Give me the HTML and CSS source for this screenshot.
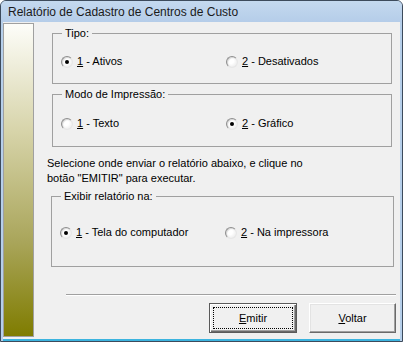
FILE: index.html
```html
<!DOCTYPE html>
<html lang="pt">
<head>
<meta charset="UTF-8" />
<title>Relatório de Cadastro de Centros de Custo</title>
<link rel="stylesheet" href="styles.css">
</head>
<body>

<div class="window">
  <div class="titlebar">Relatório de Cadastro de Centros de Custo</div>
  <div class="client">
    <div class="side-panel"></div>
    <div class="content">
      <fieldset class="group group-tipo">
        <legend>Tipo:</legend>
        <div class="options">
          <label class="radio checked"><span class="mark"></span><span><u>1</u> - Ativos</span></label>
          <label class="radio"><span class="mark"></span><span><u>2</u> - Desativados</span></label>
        </div>
      </fieldset>

      <fieldset class="group group-modo">
        <legend>Modo de Impressão:</legend>
        <div class="options">
          <label class="radio"><span class="mark"></span><span><u>1</u> - Texto</span></label>
          <label class="radio checked"><span class="mark"></span><span><u>2</u> - Gráfico</span></label>
        </div>
      </fieldset>

      <p class="hint">Selecione onde enviar o relatório abaixo, e clique no<br>botão "EMITIR" para executar.</p>

      <fieldset class="group group-destino">
        <legend>Exibir relatório na:</legend>
        <div class="options">
          <label class="radio checked"><span class="mark"></span><span><u>1</u> - Tela do computador</span></label>
          <label class="radio"><span class="mark"></span><span><u>2</u> - Na impressora</span></label>
        </div>
      </fieldset>

      <div class="separator"></div>

      <div class="actions">
        <button class="btn btn-default"><span class="focus"><u>E</u>mitir</span></button>
        <button class="btn"><u>V</u>oltar</button>
      </div>
    </div>
  </div>
</div>

</body>
</html>
```

FILE: styles.css
```css
body {
  margin: 0;
  background: #fff;
  font-family: "Liberation Sans", Arial, sans-serif;
  font-size: 11px;
  color: #000;
}

.window {
  width: 403px;
  height: 342px;
  box-sizing: border-box;
  border: 1px solid #3d4b5c;
  border-radius: 6px 6px 0 0;
  background: #b6cfea;
  display: flex;
  flex-direction: column;
  overflow: hidden;
}

.titlebar {
  height: 21px;
  line-height: 22px;
  padding-left: 7px;
  font-size: 12px;
  color: #1a1a1a;
  background: linear-gradient(#c4d9ef, #b5cde9);
  white-space: nowrap;
}

.client {
  flex: 1;
  margin: 0 2px 2px 2px;
  background: #f0f0f0;
  display: flex;
  box-shadow: 0 2px 0 #3cb4df;
}

.side-panel {
  width: 29px;
  margin: 1px 0 2px 0;
  border: 1px solid #a0a0a0;
  background: linear-gradient(#fdfdf9, #d6d3a8 35%, #a9a55a 70%, #7f7c00);
}

.content {
  flex: 1;
  display: flex;
  flex-direction: column;
}

/* group boxes */
.group {
  margin: 0 8px 0 18px;
  padding: 15px 0 15px 8px;
  border: 1px solid #a0a0a0;
  min-width: 0;
}

.group legend {
  padding: 0 3px;
  margin-left: 1px;
  line-height: 13px;
}

.group-tipo {
  margin-top: 5px;
}

.group-modo {
  margin-top: 4px;
  padding-top: 16px;
  padding-bottom: 16px;
}

.group-destino {
  margin: 4px 6px 0 17px;
  padding: 23px 0 27px 8px;
}

.options {
  display: grid;
  grid-template-columns: 165px auto;
  line-height: 13px;
}

.radio {
  display: flex;
  align-items: center;
  gap: 4px;
}

.radio .mark {
  width: 10px;
  height: 10px;
  border-radius: 50%;
  border: 1px solid;
  border-color: #8e8e8e #e6e6e6 #e6e6e6 #8e8e8e;
  background: radial-gradient(circle at 40% 40%, #ffffff 30%, #e4e4e4 100%);
  box-shadow: inset 1px 1px 1px rgba(0,0,0,0.15);
  position: relative;
}

.radio.checked .mark::after {
  content: "";
  position: absolute;
  left: 3px;
  top: 3px;
  width: 4px;
  height: 4px;
  border-radius: 50%;
  background: #000;
}

.hint {
  margin: 9px 0 0 13px;
  line-height: 15px;
}

.separator {
  margin: 27px 4px 0 32px;
  border-top: 1px solid #a0a0a0;
  border-bottom: 1px solid #fff;
}

.actions {
  display: flex;
  justify-content: flex-end;
  gap: 12px;
  margin: 7px 4px 0 0;
}

.btn {
  width: 87px;
  height: 30px;
  padding: 0;
  font-family: inherit;
  font-size: 11px;
  color: #000;
  background: #f0f0f0;
  border: 1px solid;
  border-color: #fff #6a6a6a #6a6a6a #fff;
  box-shadow: inset -1px -1px 0 #a0a0a0, inset 1px 1px 0 #e3e3e3;
}

.btn-default {
  width: 88px;
  border: 1px solid #5a5a5a;
  box-shadow: inset 1px 1px 0 #fff, inset -1px -1px 0 #6a6a6a, inset -2px -2px 0 #a0a0a0;
  padding: 3px;
}

.btn .focus {
  display: flex;
  align-items: center;
  justify-content: center;
  height: 100%;
  box-sizing: border-box;
  border: 1px dotted #000;
}
```
